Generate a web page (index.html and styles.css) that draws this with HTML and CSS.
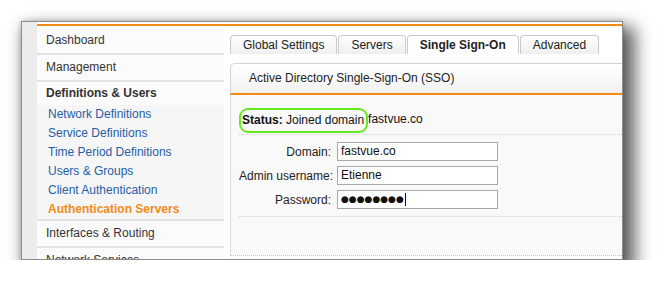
FILE: index.html
```html
<!DOCTYPE html>
<html lang="en">
<head>
    <meta charset="UTF-8">
    <title>Authentication Servers - Single Sign-On</title>
    <link rel="stylesheet" href="styles.css">
</head>
<body>

<div class="shot">
    <div class="strip"></div>
    <div class="app">
        <div class="layout">
            <nav class="menu">
                <div class="menu-item">Dashboard</div>
                <div class="menu-item">Management</div>
                <div class="menu-group">
                    <div class="menu-head">Definitions &amp; Users</div>
                    <ul class="submenu">
                        <li>Network Definitions</li>
                        <li>Service Definitions</li>
                        <li>Time Period Definitions</li>
                        <li>Users &amp; Groups</li>
                        <li>Client Authentication</li>
                        <li class="current">Authentication Servers</li>
                    </ul>
                </div>
                <div class="menu-item">Interfaces &amp; Routing</div>
                <div class="menu-item">Network Services</div>
            </nav>

            <div class="content">
                <ul class="tabs">
                    <li class="tab">Global Settings</li>
                    <li class="tab">Servers</li>
                    <li class="tab active">Single Sign-On</li>
                    <li class="tab">Advanced</li>
                </ul>

                <div class="box">
                    <div class="box-head">Active Directory Single-Sign-On (SSO)</div>
                    <div class="box-body">
                        <div class="status-row">
                            <span class="status"><b>Status:</b> Joined domain</span>
                            <span class="status-domain">fastvue.co</span>
                        </div>
                        <div class="form">
                            <div class="field">
                                <span class="label">Domain:</span>
                                <div class="input">fastvue.co</div>
                            </div>
                            <div class="field">
                                <span class="label">Admin username:</span>
                                <div class="input">Etienne</div>
                            </div>
                            <div class="field">
                                <span class="label">Password:</span>
                                <div class="input"><span class="dots">●●●●●●●●</span><span class="caret"></span></div>
                            </div>
                        </div>
                    </div>
                </div>
            </div>
        </div>
    </div>
</div>

</body>
</html>
```

FILE: styles.css
```css
body {
    margin: 0;
    background: #fff;
    font-family: "Liberation Sans", Arial, sans-serif;
    font-size: 12px;
    color: #222;
}
.shot {
    margin: 21px 0 0 21px;
    width: 600px;
    height: 237px;
    border: 1px solid #8c8c8c;
    display: flex;
    overflow: hidden;
    background: #fff;
    box-shadow: 8px 10px 16px 4px rgba(0, 0, 0, 0.62), 0 0 6px rgba(0, 0, 0, 0.2);
}
.strip {
    width: 15px;
    flex-shrink: 0;
    background: #ececec;
}
.app {
    flex: 1;
    min-width: 0;
    padding-top: 2px;
}
.layout {
    display: flex;
    border-top: 2px solid #f28a16;
}

/* left menu */
.menu {
    width: 187px;
    flex-shrink: 0;
    padding-top: 2px;
    background: #fbfbfb;
}
.menu-item {
    height: 25px;
    line-height: 25px;
    padding-left: 9px;
    color: #333;
    border-bottom: 2px solid #e2e2e2;
}
.menu-group {
    border-bottom: 2px solid #e2e2e2;
}
.menu-head {
    height: 23px;
    line-height: 23px;
    padding-left: 9px;
    font-weight: bold;
    color: #333;
}
.submenu {
    list-style-type: none;
    margin: 0;
    padding: 0;
    background: #f6f6f6;
}
.submenu li {
    height: 19px;
    line-height: 19px;
    padding-left: 11px;
    color: #1f5da6;
}
.submenu li.current {
    color: #f28a16;
    font-weight: bold;
}

/* right side */
.content {
    flex: 1;
    min-width: 0;
    padding: 9px 0 0 6px;
}
.tabs {
    display: flex;
    list-style-type: none;
    margin: 0;
    padding: 0;
}
.tab {
    height: 18px;
    line-height: 18px;
    padding: 0 12px;
    margin-right: 1px;
    border: 1px solid #c9c9c9;
    border-bottom: none;
    border-radius: 4px 4px 0 0;
    background: linear-gradient(#fefefe, #efefef);
    color: #222;
    white-space: nowrap;
}
.tab.active {
    background: #fff;
    font-weight: bold;
}
.box {
    margin-top: 9px;
    width: 420px;
}
.box-head {
    height: 29px;
    line-height: 29px;
    padding-left: 18px;
    border: 1px solid #d3d3d3;
    border-right: none;
    border-bottom: 2px solid #f28a16;
    border-radius: 5px 0 0 0;
    background: linear-gradient(#fff, #f1f1f1);
    color: #222;
}
.box-body {
    height: 161px;
    box-sizing: border-box;
    padding: 13px 0 0 8px;
    background: #f9f9f9;
    border-left: 1px dotted #c6c6c6;
    border-bottom: 1px dotted #c6c6c6;
}
.status-row {
    display: flex;
    height: 26px;
    border-bottom: 1px dotted #d2d2d2;
}
.status {
    height: 21px;
    line-height: 21px;
    padding: 0 2px 0 1px;
    border: 2px solid #64ea1e;
    border-radius: 9px;
    color: #111;
}
.status-domain {
    margin-top: 3px;
    line-height: 16px;
    color: #111;
}
.form {
    padding: 7px 0 2px;
    border-bottom: 1px dotted #d2d2d2;
}
.field {
    display: flex;
    align-items: center;
    height: 19px;
    margin-bottom: 5px;
}
.label {
    flex-shrink: 0;
    width: 98px;
    box-sizing: border-box;
    padding-right: 6px;
    text-align: right;
    white-space: nowrap;
    color: #222;
}
.input {
    width: 156px;
    height: 17px;
    line-height: 17px;
    padding-left: 3px;
    display: flex;
    align-items: center;
    border: 1px solid #a8a8a8;
    background: #fff;
    color: #111;
}
.dots {
    font-family: "DejaVu Sans", sans-serif;
    font-size: 9px;
    color: #111;
}
.caret {
    width: 1px;
    height: 13px;
    margin-left: 1px;
    background: #111;
}
```
